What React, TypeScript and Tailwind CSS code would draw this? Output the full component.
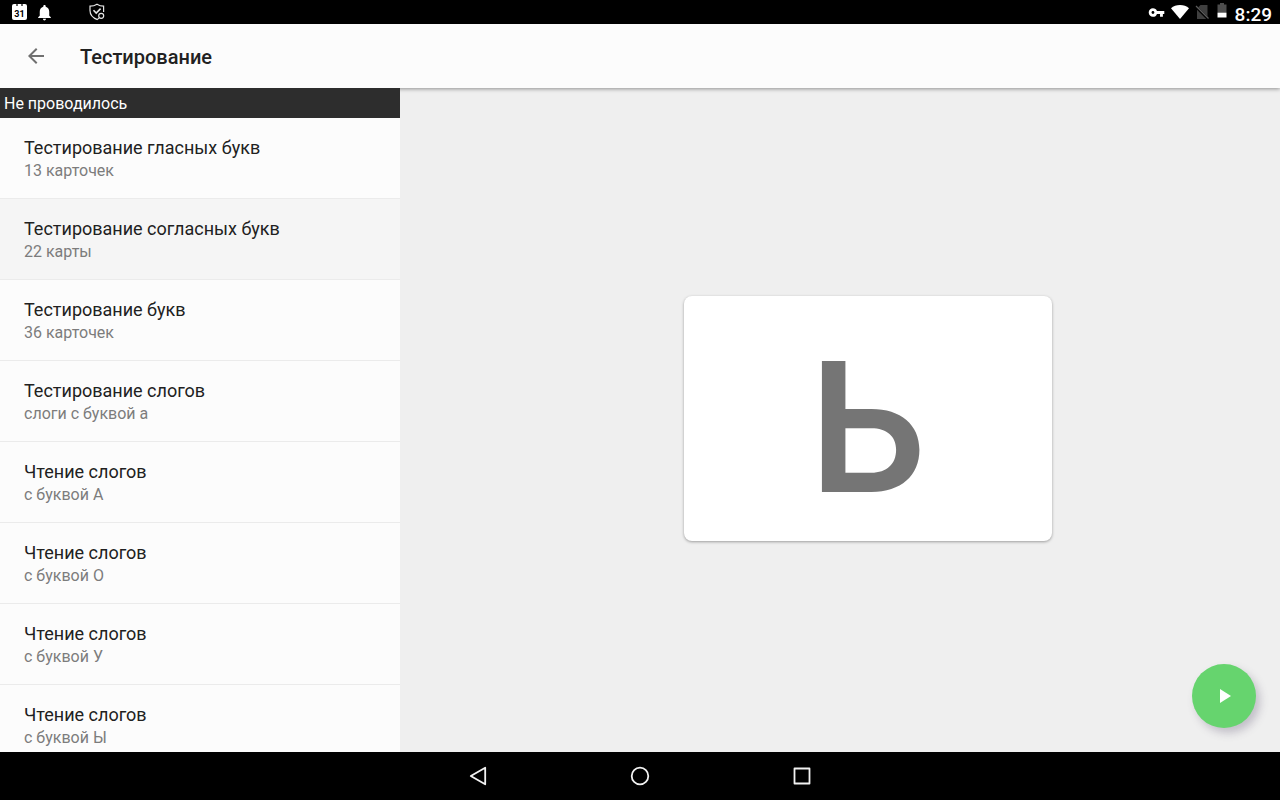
import { MdArrowBack, MdNotifications, MdPlayArrow, MdVpnKey } from "react-icons/md";

type Lesson = {
    title: string;
    note: string;
    selected?: boolean;
};

const lessons: Lesson[] = [
    { title: "Тестирование гласных букв", note: "13 карточек" },
    { title: "Тестирование согласных букв", note: "22 карты", selected: true },
    { title: "Тестирование букв", note: "36 карточек" },
    { title: "Тестирование слогов", note: "слоги с буквой а" },
    { title: "Чтение слогов", note: "с буквой А" },
    { title: "Чтение слогов", note: "с буквой О" },
    { title: "Чтение слогов", note: "с буквой У" },
    { title: "Чтение слогов", note: "с буквой Ы" },
];

function StatusBar() {
    return (
        <div className="flex h-6 shrink-0 items-center justify-between bg-black px-2 text-white">
            <div className="flex items-center pl-1">
                <div className="relative flex h-4 w-[15px] items-end justify-center rounded-xs bg-white text-[9px] leading-3 font-bold text-black">
                    31
                    <span className="absolute top-0 left-1 h-0.5 w-0.5 bg-black/60" />
                    <span className="absolute top-0 right-1 h-0.5 w-0.5 bg-black/60" />
                </div>
                <MdNotifications className="ml-2" size={19} />
                <svg className="ml-[34px]" width="18" height="18" viewBox="0 0 18 18" fill="none" stroke="#e5e5e5" strokeWidth="1.2">
                    <path d="M15.600 9V3.200C12.800 3.200 10.800 2.400 9 1.200C7.200 2.400 5 3.200 2 3.200V7.500C2 11.500 5 15 9.500 16.600" />
                    <path d="M5.500 7.300L8.200 10L12.600 5.600" strokeWidth="1.600" />
                    <circle cx="13.200" cy="12.800" r="2.500" />
                    <path d="M11.400 14.600L9.200 16.600" />
                </svg>
            </div>
            <div className="flex items-center">
                <MdVpnKey size={17} />
                <svg className="ml-1.5" width="18" height="14" viewBox="0 0 18 14" fill="#fff">
                    <path d="M9 14L0 3.200C2.400 1.200 5.500 0 9 0S15.600 1.200 18 3.200Z" />
                </svg>
                <svg className="ml-1.5" width="14" height="14" viewBox="0 0 14 14">
                    <path d="M5.500 0H12.500V14H2V3.500Z" fill="#3f3f3f" />
                    <path d="M0.500 1.500L13 14" stroke="#000" strokeWidth="2.600" />
                    <path d="M1 1L13.500 13.500" stroke="#5c5c5c" strokeWidth="1.200" />
                </svg>
                <svg className="mb-1 ml-2" width="10" height="16" viewBox="0 0 10 16">
                    <path d="M3 1H7V2.500H9.500V10H0.500V2.500H3Z" fill="#4d4d4d" />
                    <path d="M0.500 10.500H9.500V15.500H0.500Z" fill="#fff" />
                </svg>
                <span className="mt-1.5 ml-2 text-[19px] leading-5 font-medium">8:29</span>
            </div>
        </div>
    );
}

function LessonRow({ title, note, selected = false }: Lesson) {
    return (
        <li className="border-b border-[#ebebeb]">
            <button
                type="button"
                className={`flex h-20 w-full flex-col justify-center px-6 pt-0.5 text-left ${selected ? "bg-[#f5f5f5]" : ""}`}
            >
                <span className="text-lg leading-6 text-[#212121]">{title}</span>
                <span className="text-base leading-[22px] text-[#7c7c7c]">{note}</span>
            </button>
        </li>
    );
}

function NavBar() {
    return (
        <nav className="flex h-12 shrink-0 items-center justify-center gap-[138px] bg-black">
            <button type="button" aria-label="Назад">
                <svg width="24" height="24" viewBox="0 0 24 24" fill="none" stroke="#f2f2f2" strokeWidth="1.8" strokeLinejoin="round">
                    <path d="M19.200 3.700V20.300L4.800 12Z" />
                </svg>
            </button>
            <button type="button" aria-label="Домой">
                <svg width="24" height="24" viewBox="0 0 24 24" fill="none" stroke="#f2f2f2" strokeWidth="1.8">
                    <circle cx="12" cy="12" r="8.300" />
                </svg>
            </button>
            <button type="button" aria-label="Обзор">
                <svg width="24" height="24" viewBox="0 0 24 24" fill="none" stroke="#f2f2f2" strokeWidth="1.8" strokeLinejoin="round">
                    <rect x="4.500" y="4.500" width="15" height="15" />
                </svg>
            </button>
        </nav>
    );
}

export default function App() {
    return (
        <div className="flex h-screen flex-col overflow-hidden bg-[#efefef] font-['Roboto',sans-serif]">
            <StatusBar />
            <header className="flex h-16 shrink-0 items-center bg-[#fcfcfc] px-6 shadow-[0_1px_4px_rgba(0,0,0,0.4)]">
                <button type="button" aria-label="Вернуться" className="text-[#707070]">
                    <MdArrowBack size={24} />
                </button>
                <h1 className="ml-8 pt-0.5 text-xl font-medium text-[#212121]">Тестирование</h1>
            </header>
            <div className="relative flex min-h-0 flex-1">
                <aside className="w-[400px] shrink-0 overflow-hidden bg-[#fcfcfc]">
                    <h2 className="bg-[#2d2d2d] px-1 pt-0.5 text-base leading-7 text-white">Не проводилось</h2>
                    <ul>
                        {lessons.map((lesson) => (
                            <LessonRow key={lesson.note} {...lesson} />
                        ))}
                    </ul>
                </aside>
                <main className="flex flex-1 items-center justify-center pb-[3px] pl-14">
                    <div className="flex h-[245px] w-[368px] items-center justify-center rounded-lg bg-white pt-4 shadow-[0_1px_3px_rgba(0,0,0,0.35)]">
                        <span className="font-['Inter',sans-serif] text-[180px] leading-none font-semibold text-[#757575]">Ь</span>
                    </div>
                </main>
                <button
                    type="button"
                    aria-label="Начать"
                    className="absolute right-6 bottom-6 flex h-16 w-16 items-center justify-center rounded-full bg-[#66d46e] text-white shadow-[4px_5px_8px_rgba(90,80,110,0.3)]"
                >
                    <MdPlayArrow size={24} />
                </button>
            </div>
            <NavBar />
        </div>
    );
}
